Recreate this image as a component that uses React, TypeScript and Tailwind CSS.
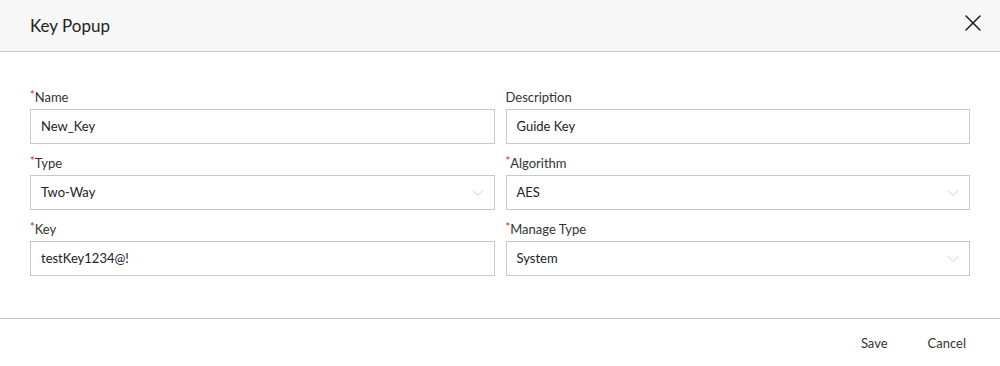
import { X, ChevronDown } from "lucide-react";

const font = { fontFamily: "Lato, 'Open Sans', sans-serif" };

function Label({ text, required }: { text: string; required?: boolean }) {
  return (
    <div className="h-[18px] leading-[18px] mb-[3px] text-[13px] text-[#333]">
      {required && <span className="text-[11px] text-[#e02020] align-top leading-[14px]">*</span>}
      {text}
    </div>
  );
}

function TextField({ label, value, required }: { label: string; value: string; required?: boolean }) {
  return (
    <div>
      <Label text={label} required={required} />
      <div className="h-[35px] border border-[#c8c8c8] bg-white px-[10px] flex items-center text-[13px] text-[#222]">
        {value}
      </div>
    </div>
  );
}

function SelectField({ label, value, required }: { label: string; value: string; required?: boolean }) {
  return (
    <div>
      <Label text={label} required={required} />
      <div className="h-[35px] border border-[#c8c8c8] bg-white pl-[10px] pr-[6px] flex items-center justify-between text-[13px] text-[#222]">
        <span>{value}</span>
        <ChevronDown className="w-[20px] h-[20px] text-[#c8c8c8]" strokeWidth={1.1} />
      </div>
    </div>
  );
}

export default function App() {
  return (
    <div className="w-[1000px] h-[366px] bg-white flex flex-col" style={font}>
      <div className="h-[52px] bg-[#f7f7f7] border-b border-[#c8c8c8] flex items-center justify-between pl-[30px] pr-[13px]">
        <h1 className="text-[17px] text-[#222]">Key Popup</h1>
        <X className="w-[28px] h-[28px] mb-[6px] text-[#222]" strokeWidth={1.3} />
      </div>

      <div className="grid grid-cols-2 gap-x-[11px] gap-y-[10px] px-[30px] pt-[36px] pb-[42px] border-b border-[#c8c8c8]">
        <TextField label="Name" value="New_Key" required />
        <TextField label="Description" value="Guide Key" />
        <SelectField label="Type" value="Two-Way" required />
        <SelectField label="Algorithm" value="AES" required />
        <TextField label="Key" value="testKey1234@!" required />
        <SelectField label="Manage Type" value="System" required />
      </div>

      <div className="flex-1 flex items-center justify-end pt-[3px] pr-[22px] text-[13px] text-[#333]">
        <button className="px-[12px] py-[4px]">Save</button>
        <button className="ml-[16px] px-[12px] py-[4px]">Cancel</button>
      </div>
    </div>
  );
}
